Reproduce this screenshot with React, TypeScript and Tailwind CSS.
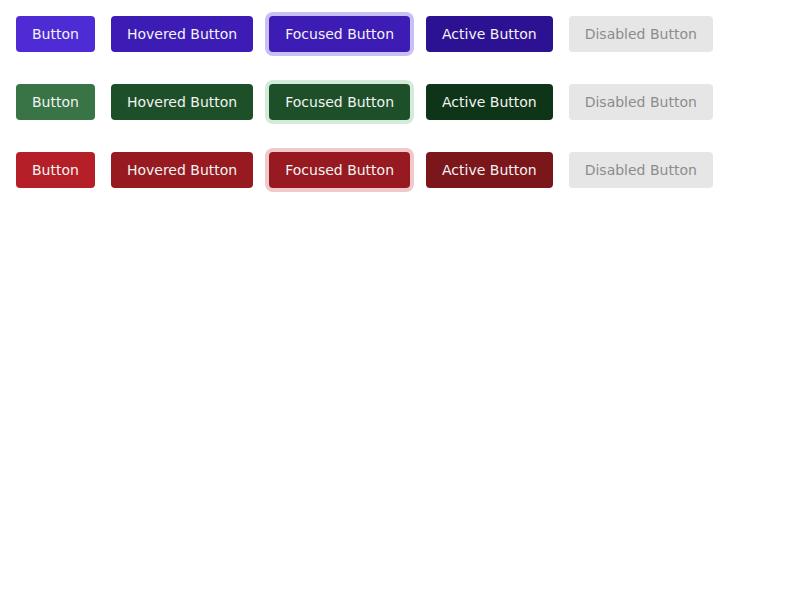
const rows = [
  {
    base: 'bg-[#4f2bd6]',
    hover: 'bg-[#3d1bb5]',
    focus: 'bg-[#3d1bb5] ring-4 ring-[#c8bff5]',
    active: 'bg-[#2c1192]',
  },
  {
    base: 'bg-[#387446]',
    hover: 'bg-[#1d5028]',
    focus: 'bg-[#1d5028] ring-4 ring-[#d3ebd9]',
    active: 'bg-[#0f3518]',
  },
  {
    base: 'bg-[#b41f28]',
    hover: 'bg-[#981a21]',
    focus: 'bg-[#981a21] ring-4 ring-[#f0c9cb]',
    active: 'bg-[#7b161b]',
  },
];

function Btn({ className, children }: { className: string; children: React.ReactNode }) {
  return (
    <button
      type="button"
      className={`h-9 px-4 rounded text-sm leading-none text-[#f3f3f3] ${className}`}
    >
      {children}
    </button>
  );
}

export default function App() {
  return (
    <div className="p-4 flex flex-col gap-8 bg-white min-h-screen" style={{ fontFamily: '"DejaVu Sans", sans-serif' }}>
      {rows.map((r, i) => (
        <div key={i} className="flex gap-4">
          <Btn className={r.base}>Button</Btn>
          <Btn className={r.hover}>Hovered Button</Btn>
          <Btn className={r.focus}>Focused Button</Btn>
          <Btn className={r.active}>Active Button</Btn>
          <button
            type="button"
            disabled
            className="h-9 px-4 rounded text-sm leading-none bg-[#e6e6e6] text-[#8c8c8c]"
          >
            Disabled Button
          </button>
        </div>
      ))}
    </div>
  );
}
